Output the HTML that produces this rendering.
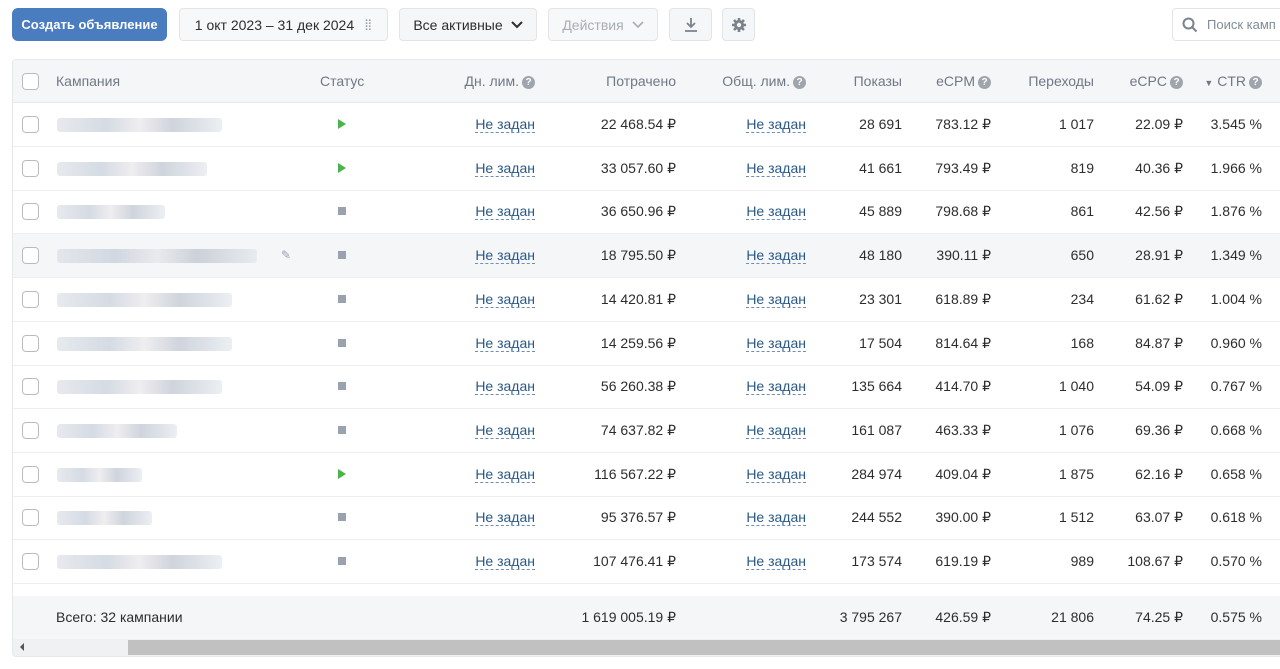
<!DOCTYPE html>
<html><head><meta charset="utf-8"><style>
*{box-sizing:border-box;margin:0;padding:0}
body{width:1280px;height:669px;overflow:hidden;background:#fff;font-family:"Liberation Sans",sans-serif;font-size:14px;color:#2c2d2e;position:relative}
.btn{position:absolute;top:8px;height:33px;border:1px solid #e2e4e7;border-radius:4px;background:#f5f6f8;display:flex;align-items:center;justify-content:center;font-size:14px}
.tbl{position:absolute;left:12px;top:59px;width:1280px;height:598px;border:1px solid #e7e8ea;border-radius:4px;overflow:hidden}
.hdr{position:absolute;left:0;top:0;width:100%;height:43px;background:#f5f6f8;border-bottom:1px solid #e7e8ea}
.row{position:absolute;left:0;width:100%;height:44px;border-bottom:1px solid #eceef0}
.c{position:absolute;top:0;line-height:43px;white-space:nowrap}
.r{text-align:right}
.cb{position:absolute;left:9px;top:13px;width:17px;height:17px;border:1.5px solid #b8bcc2;border-radius:4px;background:#fff}
.lnk{color:#2a5885;border-bottom:1px dashed #6f8eb3;line-height:16px;display:inline-block}
.hc{color:#6f7985}
.q{display:inline-block;width:13px;height:13px;border-radius:50%;background:#9ea5ad;color:#fff;font-size:10px;line-height:13px;text-align:center;font-weight:bold;vertical-align:1px;margin-left:3px}
.play{position:absolute;left:325px;top:16px;width:0;height:0;border-left:8px solid #4bb34b;border-top:5px solid transparent;border-bottom:5px solid transparent}
.stop{position:absolute;left:325px;top:17px;width:8px;height:8px;background:#99a2ad}
.blur{position:absolute;left:44px;top:15px;height:14px;border-radius:3px;background:linear-gradient(90deg,#d7dbe2,#b9c3d2 30%,#e4e2e6 50%,#b0b8c6 70%,#dfe4ea)}
</style></head><body>
<div class="btn" style="left:12px;width:155px;background:#4a7cc0;border-color:#4a7cc0;color:#fff;font-weight:bold;font-size:13px;border-radius:6px">Создать объявление</div>
<div class="btn" style="left:179px;width:209px;background:#f7f8fa">1 окт 2023 – 31 дек 2024 <span style="margin-left:10px;color:#99a2ad;font-size:11px">⣿</span></div>
<div class="btn" style="left:399px;width:138px">Все активные <svg width="12" height="8" style="margin-left:8px"><path d="M1 1l5 5 5-5" stroke="#2c2d2e" stroke-width="2" fill="none"/></svg></div>
<div class="btn" style="left:548px;width:110px;color:#a7adb5;background:#f7f8fa">Действия <svg width="12" height="8" style="margin-left:8px"><path d="M1 1l5 5 5-5" stroke="#a7adb5" stroke-width="1.6" fill="none"/></svg></div>
<div class="btn" style="left:669px;width:43px"><svg width="14" height="16"><path d="M7 1v9M3 6l4 4 4-4M1 14h12" stroke="#7a828c" stroke-width="1.8" fill="none"/></svg></div>
<div class="btn" style="left:722px;width:33px"><svg width="16" height="16" viewBox="0 0 16 16"><circle cx="8" cy="8" r="5" fill="#7a828c"/><g stroke="#7a828c" stroke-width="2.6"><path d="M8 1v14M1 8h14M3 3l10 10M13 3L3 13"/></g><circle cx="8" cy="8" r="2.2" fill="#f5f6f8"/></svg></div>
<div class="btn" style="left:1172px;width:130px;background:#fff;justify-content:flex-start;padding-left:9px;color:#818c99;font-size:13px"><svg width="16" height="16" style="margin-right:9px"><circle cx="6.5" cy="6.5" r="5" stroke="#7a828c" stroke-width="2" fill="none"/><path d="M10 10l4.5 4.5" stroke="#7a828c" stroke-width="2"/></svg>Поиск камп</div>

<div class="tbl">
<div class="hdr">
<div class="cb"></div>
<div class="c hc" style="left:43px">Кампания</div>
<div class="c hc" style="left:307px">Статус</div>
<div class="c hc r" style="right:756px">Дн. лим.<span class="q">?</span></div>
<div class="c hc r" style="right:615px">Потрачено</div>
<div class="c hc r" style="right:485px">Общ. лим.<span class="q">?</span></div>
<div class="c hc r" style="right:389px">Показы</div>
<div class="c hc r" style="right:300px">eCPM<span class="q">?</span></div>
<div class="c hc r" style="right:197px">Переходы</div>
<div class="c hc r" style="right:108px">eCPC<span class="q">?</span></div>
<div class="c hc r" style="right:29px"><span style="font-size:9px">▼</span> CTR<span class="q">?</span></div>
</div>
<div id="rows"></div>
<div style="position:absolute;left:0;top:536px;width:100%;height:43px;background:#f5f6f8">
<div class="c" style="left:43px;line-height:43px">Всего: 32 кампании</div>
<div class="c r" style="right:615px">1 619 005.19 ₽</div>
<div class="c r" style="right:389px">3 795 267</div>
<div class="c r" style="right:300px">426.59 ₽</div>
<div class="c r" style="right:197px">21 806</div>
<div class="c r" style="right:108px">74.25 ₽</div>
<div class="c r" style="right:29px">0.575 %</div>
</div>
<div style="position:absolute;left:0;top:579px;width:100%;height:17px;background:#f0f1f3"><div style="position:absolute;left:115px;top:1px;width:1200px;height:15px;background:#c1c1c1"></div><div style="position:absolute;left:7px;top:4px;border-right:4px solid #555;border-top:4px solid transparent;border-bottom:4px solid transparent"></div></div>
</div>
<script>
var d=[["p","22 468.54","28 691","783.12","1 017","22.09","3.545",165],
["p","33 057.60","41 661","793.49","819","40.36","1.966",150],
["s","36 650.96","45 889","798.68","861","42.56","1.876",108],
["s","18 795.50","48 180","390.11","650","28.91","1.349",200],
["s","14 420.81","23 301","618.89","234","61.62","1.004",175],
["s","14 259.56","17 504","814.64","168","84.87","0.960",175],
["s","56 260.38","135 664","414.70","1 040","54.09","0.767",165],
["s","74 637.82","161 087","463.33","1 076","69.36","0.668",120],
["p","116 567.22","284 974","409.04","1 875","62.16","0.658",85],
["s","95 376.57","244 552","390.00","1 512","63.07","0.618",95],
["s","107 476.41","173 574","619.19","989","108.67","0.570",165]];
var h="";d.forEach(function(r,i){var t=43+i*43.7;
h+='<div class="row" style="top:'+t+'px;'+(i==3?'background:#f5f6f8':'')+'"><div class="cb"></div><div class="blur" style="width:'+r[7]+'px;opacity:.6"></div>'+
(i==3?'<div class="c" style="left:268px;color:#99a2ad;font-size:12px">✎</div>':'')+
'<div class="'+(r[0]=="p"?"play":"stop")+'"></div>'+
'<div class="c r" style="right:756px"><span class="lnk">Не задан</span></div>'+
'<div class="c r" style="right:615px">'+r[1]+' ₽</div>'+
'<div class="c r" style="right:485px"><span class="lnk">Не задан</span></div>'+
'<div class="c r" style="right:389px">'+r[2]+'</div>'+
'<div class="c r" style="right:300px">'+r[3]+' ₽</div>'+
'<div class="c r" style="right:197px">'+r[4]+'</div>'+
'<div class="c r" style="right:108px">'+r[5]+' ₽</div>'+
'<div class="c r" style="right:29px">'+r[6]+' %</div></div>';});
document.getElementById("rows").innerHTML=h;
</script>
</body></html>
